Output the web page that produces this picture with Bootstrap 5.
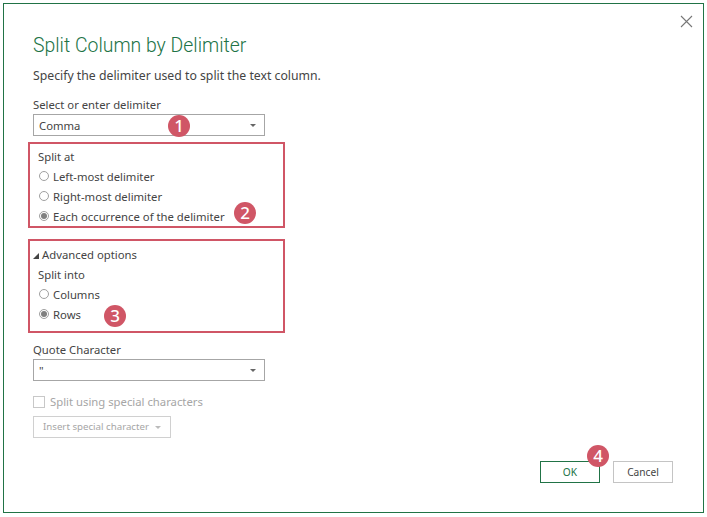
<!DOCTYPE html>
<html lang="en">
<head>
<meta charset="utf-8">
<title>Split Column by Delimiter</title>
<link rel="stylesheet" href="https://cdn.jsdelivr.net/npm/bootstrap@5.3.0/dist/css/bootstrap.min.css">
<style>
html,body{height:100%;background:#fff;overflow:hidden}
body{font-family:"Noto Sans","Open Sans",sans-serif;font-size:11.3px;color:#444;line-height:20px}
.dlg{position:absolute;left:3px;top:3px;width:701px;height:510px;border:1px solid #217346;background:#fff;padding:0 0 0 29px}
.closex{position:absolute;right:10px;top:7px;width:13px;height:13px;display:block;background:none;border:0;padding:0}
.dtitle{font-family:Roboto,"Noto Sans",sans-serif;font-size:19.4px;font-weight:300;color:#217346;margin:0;line-height:28px;padding-top:28px}
.dsub{font-size:12.25px;color:#444;margin:0;line-height:20px;padding-top:6px}
.flabel{line-height:20px;margin:0}
.lab1{line-height:18px;margin-top:10px}
.lab2{line-height:19px;margin-top:7px}
.sel{width:232px;height:22px;border:1px solid #a6a6a6;padding:0 5px;line-height:21px;font-size:11.3px}
.tri{width:0;height:0;border-left:3px solid transparent;border-right:3px solid transparent;border-top:3px solid #666}
.sel .tri{margin-right:3px}
.hl{width:257px;border:2px solid #d05666;margin-left:-5px;padding:3px 0 0 8px}
.hl1{margin-top:6px;height:86px}
.hl2{margin-top:11px;height:94px;padding-top:4px}
.rad{height:20px;gap:4px}
.rdot{width:10px;height:10px;margin-left:1px;border-radius:50%;border:1px solid #a0a0a0;background:#fff;flex:none;position:relative;top:-1px}
.rdot.on::after{content:"";display:block;width:6px;height:6px;margin:1px;border-radius:50%;background:#808080}
.adv{margin-left:-5px;gap:3px;height:20px}
.advtri{width:0;height:0;border-left:6px solid transparent;border-bottom:6px solid #444;flex:none;margin-top:2px}
.dis{color:#a6a6a6}
.chk{margin-top:11px;height:20px;gap:5px}
.cb{width:12px;height:12px;border:1px solid #c8c8c8;flex:none}
.insbtn{width:138px;height:22px;border:1px solid #d0d0d0;gap:6px;padding-left:9px;color:#a6a6a6;font-size:9.7px;line-height:1}
.tri.lt{border-top-color:#bbb}
.dbtn{width:60px;height:22px;font-size:10.2px;line-height:1;padding:0;border-radius:0;background:#fff;color:#444;--bs-btn-hover-bg:#fff}
.okb{border:1px solid #217346;color:#217346}
.cxb{border:1px solid #c4c4c4}
.foot{position:absolute;top:457px;left:536px;gap:13px}
.num{position:absolute;width:22px;height:22px;border-radius:50%;background:#d05666;color:#fff;font-size:17px;font-weight:500;text-align:center;line-height:22px}
.n1{left:164px;top:111px}
.n2{left:230px;top:198px}
.n3{left:100px;top:301px}
.n4{left:583px;top:441px}
</style>
</head>
<body>
<div class="dlg">
  <button class="closex" type="button" aria-label="Close">
    <svg width="13" height="13" viewBox="0 0 13 13"><path d="M1 1 12 12M12 1 1 12" stroke="#777" stroke-width="1.1" fill="none"/></svg>
  </button>
  <h1 class="dtitle">Split Column by Delimiter</h1>
  <p class="dsub">Specify the delimiter used to split the text column.</p>
  <p class="lab1 mb-0">Select or enter delimiter</p>
  <div class="sel d-flex align-items-center justify-content-between"><span>Comma</span><span class="tri"></span></div>
  <div class="hl hl1">
    <div class="flabel">Split at</div>
    <div class="rad d-flex align-items-center"><span class="rdot"></span><span>Left-most delimiter</span></div>
    <div class="rad d-flex align-items-center"><span class="rdot"></span><span>Right-most delimiter</span></div>
    <div class="rad d-flex align-items-center"><span class="rdot on"></span><span>Each occurrence of the delimiter</span></div>
  </div>
  <div class="hl hl2">
    <div class="adv d-flex align-items-center"><span class="advtri"></span><span>Advanced options</span></div>
    <div class="flabel">Split into</div>
    <div class="rad d-flex align-items-center"><span class="rdot"></span><span>Columns</span></div>
    <div class="rad d-flex align-items-center"><span class="rdot on"></span><span>Rows</span></div>
  </div>
  <p class="lab2 mb-0">Quote Character</p>
  <div class="sel d-flex align-items-center justify-content-between"><span>"</span><span class="tri"></span></div>
  <div class="chk d-flex align-items-center dis"><span class="cb"></span><span>Split using special characters</span></div>
  <div class="insbtn d-flex align-items-center mt-1"><span>Insert special character</span><span class="tri lt"></span></div>
  <div class="foot d-flex">
    <button type="button" class="btn dbtn okb">OK</button>
    <button type="button" class="btn dbtn cxb">Cancel</button>
  </div>
  <span class="num n1">1</span>
  <span class="num n2">2</span>
  <span class="num n3">3</span>
  <span class="num n4">4</span>
</div>
<script src="https://cdn.jsdelivr.net/npm/bootstrap@5.3.0/dist/js/bootstrap.bundle.min.js"></script>
</body>
</html>
